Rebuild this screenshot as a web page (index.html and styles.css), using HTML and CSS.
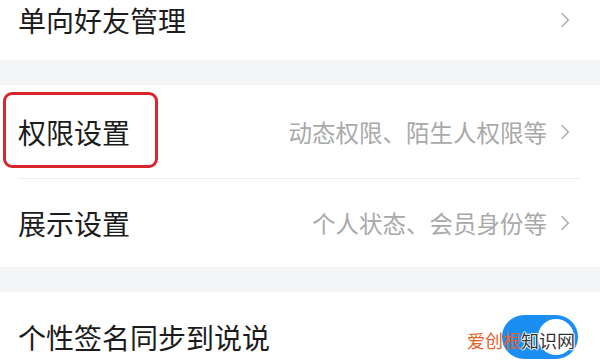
FILE: index.html
```html
<!DOCTYPE html>
<html lang="zh-CN">
<head>
<meta charset="utf-8">
<link rel="stylesheet" href="styles.css">
</head>
<body>
<div class="page">
  <section class="group">
    <div class="row row-top">
      <span class="label">单向好友管理</span>
      <span class="right">
        <svg class="chev" viewBox="0 0 12 20"><path d="M2 2 L10 10 L2 18"/></svg>
      </span>
    </div>
  </section>
  <div class="band"></div>
  <section class="group">
    <div class="row row-a">
      <span class="label">权限设置</span>
      <span class="right"><span class="hint">动态权限、陌生人权限等</span>
        <svg class="chev" viewBox="0 0 12 20"><path d="M2 2 L10 10 L2 18"/></svg>
      </span>
      <span class="highlight"></span>
    </div>
    <div class="divider"></div>
    <div class="row row-b">
      <span class="label">展示设置</span>
      <span class="right"><span class="hint">个人状态、会员身份等</span>
        <svg class="chev" viewBox="0 0 12 20"><path d="M2 2 L10 10 L2 18"/></svg>
      </span>
    </div>
  </section>
  <div class="band band2"></div>
  <section class="group">
    <div class="row row-c">
      <span class="label">个性签名同步到说说</span>
      <span class="toggle"><span class="knob"></span></span>
      <span class="watermark"><span class="wm-o">爱创根</span><span class="wm-d">知识网</span></span>
    </div>
  </section>
</div>
</body>
</html>
```
FILE: styles.css
```css
html, body {
  margin: 0;
  padding: 0;
  background: #ffffff;
}
.page {
  width: 600px;
  height: 360px;
  overflow: hidden;
  font-family: "Noto Sans CJK SC", "Noto Sans", sans-serif;
  color: #1c1c1c;
}
.group {
  background: #ffffff;
}
.band {
  height: 25px;
  background: #f4f5f7;
}
.row {
  position: relative;
  display: flex;
  align-items: center;
  justify-content: space-between;
  padding: 0 30px 0 18px;
}
.label {
  font-size: 28px;
  line-height: 40px;
  color: #1c1c1c;
}
.row-top {
  height: 60px;
  align-items: flex-start;
}
.row-top .right {
  height: 40px;
}
.row-a {
  height: 93px;
}
.row-b {
  height: 88px;
}
.row-c {
  height: 90px;
  padding-right: 22px;
}
.right {
  display: flex;
  align-items: center;
  gap: 13px;
}
.hint {
  font-size: 23.5px;
  line-height: 30px;
  color: #a9a9a9;
}
.chev {
  width: 10px;
  height: 18px;
  fill: none;
  stroke: #acacac;
  stroke-width: 1.8;
}
.divider {
  height: 1px;
  margin: 0 20px 0 18px;
  background: #efefef;
}
.highlight {
  position: absolute;
  left: 3px;
  top: 7px;
  width: 149px;
  height: 70px;
  border: 3px solid #d8262f;
  border-radius: 9px;
}
.toggle {
  display: flex;
  align-items: center;
  justify-content: flex-end;
  width: 76px;
  height: 44px;
  padding: 0 4px;
  box-sizing: border-box;
  border-radius: 22px;
  background: #1a8ef2;
}
.knob {
  width: 36px;
  height: 36px;
  border-radius: 50%;
  background: #ffffff;
}
.watermark {
  position: absolute;
  right: 25px;
  top: 38px;
  font-size: 18px;
  line-height: 20px;
  letter-spacing: 0;
}
.wm-o {
  color: #e2622a;
}
.wm-d {
  color: #333333;
  text-shadow: 1px 0 0 #fff, -1px 0 0 #fff, 0 1px 0 #fff, 0 -1px 0 #fff;
}
```
